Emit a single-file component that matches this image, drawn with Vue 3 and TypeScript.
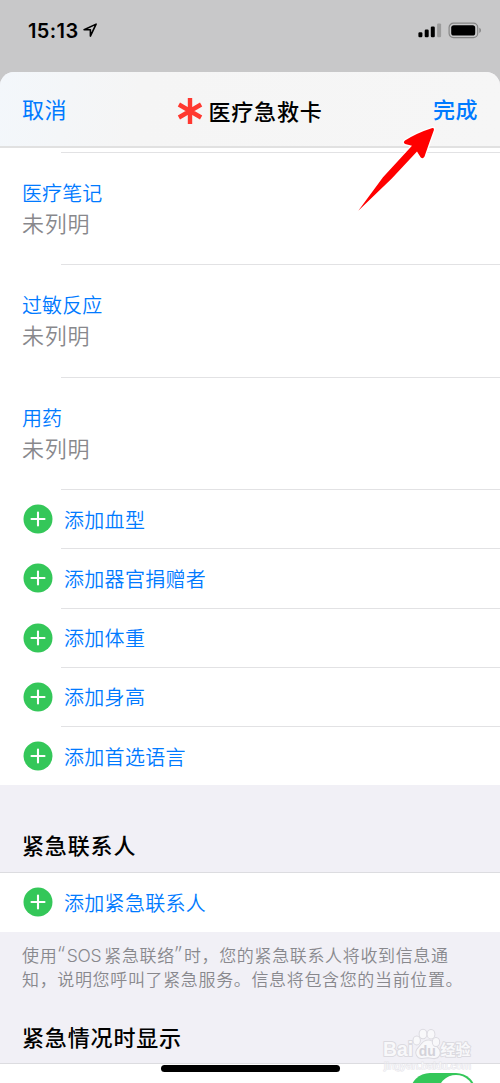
<script setup lang="ts">
interface Entry {
  label: string
  value: string
}

const entries: Entry[] = [
  { label: '医疗笔记', value: '未列明' },
  { label: '过敏反应', value: '未列明' },
  { label: '用药', value: '未列明' },
]

const additions: string[] = ['添加血型', '添加器官捐赠者', '添加体重', '添加身高', '添加首选语言']
</script>

<template>
  <div class="screen">
    <header class="status">
      <div class="clock">
        <span class="time">15:13</span>
        <svg class="location" width="15" height="15" viewBox="0 0 15 15">
          <path d="M1.1 6.8 13.1 1.1 7.4 13.1V6.8Z" />
        </svg>
      </div>
      <div class="indicators">
        <svg width="24" height="15" viewBox="0 0 24 15">
          <rect x="0.4" y="9.2" width="4" height="5" rx="1.2" />
          <rect x="6.7" y="6.6" width="4" height="7.6" rx="1.2" />
          <rect x="12.8" y="3.6" width="4" height="10.6" rx="1.2" />
          <rect x="19.1" y="0.4" width="4" height="13.8" rx="1.2" fill="#9c9c9c" />
        </svg>
        <svg width="34" height="17" viewBox="0 0 34 17">
          <rect x="1.1" y="1.2" width="28.6" height="14.4" rx="4.4" fill="none" stroke="#858585" stroke-width="1.2" />
          <rect x="3.2" y="3.2" width="24" height="10.4" rx="2.6" />
          <path d="M31.3 5.8C33.5 6.8 33.5 10 31.3 11Z" fill="#858585" />
        </svg>
      </div>
    </header>

    <main class="sheet">
      <nav class="nav">
        <span class="action">取消</span>
        <div class="title">
          <svg width="26" height="28" viewBox="0 0 26 28">
            <path d="M13 1V27M1.9 7.5 24.1 20.5M1.9 20.5 24.1 7.5" stroke="#ff3830" stroke-width="4.4" />
          </svg>
          <span>医疗急救卡</span>
        </div>
        <span class="action done">完成</span>
      </nav>

      <section class="entries">
        <div v-for="entry in entries" :key="entry.label" class="entry">
          <div class="label">{{ entry.label }}</div>
          <div class="value">{{ entry.value }}</div>
        </div>
      </section>

      <section class="additions">
        <div v-for="name in additions" :key="name" class="row">
          <svg class="plus" width="30" height="30" viewBox="0 0 30 30">
            <circle cx="15" cy="15" r="14.5" fill="#34c759" />
            <path d="M15 8.5V21.5M8.5 15H21.5" stroke="#fff" stroke-width="2.1" stroke-linecap="round" />
          </svg>
          <div class="row-text">{{ name }}</div>
        </div>
      </section>

      <h2 class="heading contacts">紧急联系人</h2>
      <div class="row contact">
        <svg class="plus" width="30" height="30" viewBox="0 0 30 30">
          <circle cx="15" cy="15" r="14.5" fill="#34c759" />
          <path d="M15 8.5V21.5M8.5 15H21.5" stroke="#fff" stroke-width="2.1" stroke-linecap="round" />
        </svg>
        <div class="row-text">添加紧急联系人</div>
      </div>
      <p class="note">
        <span class="line">使用<span class="quote open">“</span><span class="latin">SOS</span>紧急联络<span class="quote">”</span>时，您的紧急联系人将收到信息通</span>
        <span class="line">知，说明您呼叫了紧急服务。信息将包含您的当前位置。</span>
      </p>
      <h2 class="heading display">紧急情况时显示</h2>
      <div class="switch-row">
        <div class="switch"><div class="knob"></div></div>
      </div>
    </main>

    <svg class="arrow" width="86" height="92" viewBox="0 0 86 92">
      <path
        d="M3.3 85.7 28 52.2 57 20.8 50.2 19Q47.6 17.2 50 15.4Q62 7.8 77.4 2.9Q79.6 2.8 78.9 5Q74.5 17 69.4 31.8Q67.8 34.4 65.6 32.2L62 26.6 36.8 53.6Z"
        fill="#f00"
        stroke="#fff"
        stroke-width="2.6"
        stroke-linejoin="round"
        paint-order="stroke"
      />
    </svg>

    <div class="home-bar"></div>

    <svg class="watermark" width="96" height="46" viewBox="0 0 96 46">
      <g fill="#f8f8fa" stroke="#dbdae0" stroke-width="2" paint-order="stroke" stroke-linejoin="round">
        <text class="mark" x="1" y="28.4" font-size="19.5" textLength="30" lengthAdjust="spacingAndGlyphs">Bai</text>
        <path d="M46.5 12.5C41 12.5 39.5 17 36.5 20C31.5 25 36 30.5 40 30L46 29.3 51 30C57 31 60 24.5 56 20.5C52.5 17 51.5 12.5 46.5 12.5Z" />
        <ellipse cx="34.7" cy="12.4" rx="3.2" ry="4" />
        <ellipse cx="41" cy="6" rx="3.4" ry="4.3" />
        <ellipse cx="49" cy="6.2" rx="3.4" ry="4.3" />
        <ellipse cx="54" cy="14" rx="3.2" ry="4" />
        <text class="mark han" x="58.5" y="27" font-size="15" textLength="30" lengthAdjust="spacingAndGlyphs">经验</text>
      </g>
      <text class="mark" x="36.8" y="27.5" font-size="14" textLength="17" fill="#d3d2d9">du</text>
      <text class="mark site" x="2" y="41" font-size="9" textLength="87" lengthAdjust="spacingAndGlyphs" fill="#f8f8fa" stroke="#e6e5ea" stroke-width="1" paint-order="stroke">jingyan.baidu.com</text>
    </svg>
  </div>
</template>

<style>
body {
  margin: 0;
  overflow: hidden;
}
</style>

<style scoped>
.screen {
  position: relative;
  width: 500px;
  height: 1083px;
  overflow: hidden;
  background: #c8c8c9;
  color: #000;
  font-family: Inter, "Noto Sans CJK SC", sans-serif;
}
.status {
  box-sizing: border-box;
  height: 72px;
  padding: 22px 18px 0 28px;
  display: flex;
  justify-content: space-between;
  align-items: flex-start;
}
.clock {
  display: flex;
}
.time {
  width: 55px;
  font-size: 20px;
  line-height: 19px;
  font-weight: 600;
  letter-spacing: 0.4px;
  white-space: nowrap;
}
.location {
  margin-top: 1px;
  fill: none;
  stroke: #000;
  stroke-width: 1.6;
  stroke-linejoin: round;
}
.indicators {
  display: flex;
  align-items: center;
  gap: 6px;
}
.sheet {
  height: 1011px;
  overflow: hidden;
  border-radius: 14px 14px 0 0;
  background: #f1f0f6;
}
.nav {
  box-sizing: border-box;
  height: 76px;
  padding: 0 22px;
  border-bottom: 2px solid #e1e1e1;
  background: linear-gradient(100deg, #f3f7fb, #f5f5f5 28%, #f6f6f6);
  display: flex;
  justify-content: space-between;
  align-items: center;
}
.action {
  padding-top: 2px;
  font-size: 22px;
  letter-spacing: 0.5px;
  color: #007aff;
  line-height: 32px;
}
.done {
  font-weight: 500;
}
.title {
  display: flex;
  align-items: center;
  gap: 5px;
  font-size: 22px;
  font-weight: 500;
  letter-spacing: 0.8px;
  line-height: 32px;
  padding-top: 4px;
}
.title span {
  padding-top: 2px;
}
.entries {
  background: #fff;
  padding-top: 4px;
}
.entry {
  box-sizing: border-box;
  height: 112.4px;
  padding: 27px 0 0 22px;
  background: linear-gradient(#e2e2e4, #e2e2e4) 61px 0 / 100% 1px no-repeat;
}
.label {
  font-size: 20px;
  line-height: 30px;
  letter-spacing: 0.1px;
  color: #007aff;
  font-weight: 350;
}
.value {
  margin-top: -1px;
  font-size: 22px;
  line-height: 32px;
  letter-spacing: 0.7px;
  color: #88888c;
  font-weight: 350;
}
.additions {
  background: #fff;
  height: 296px;
}
.row {
  height: 59.2px;
  padding-left: 23px;
  display: flex;
  align-items: center;
  background: linear-gradient(#e2e2e4, #e2e2e4) 61px 0 / 100% 1px no-repeat;
}
.plus {
  flex: none;
  margin-top: 1px;
}
.row-text {
  padding-top: 4px;
  margin-left: 11px;
  font-size: 20px;
  line-height: 30px;
  letter-spacing: 0.3px;
  color: #007aff;
  font-weight: 350;
}
.heading {
  box-sizing: border-box;
  margin: 0;
  padding-left: 22px;
  border-bottom: 1px solid #dcdce0;
  font-size: 22px;
  font-weight: 500;
  letter-spacing: 0.85px;
  line-height: 32px;
}
.contacts {
  height: 88px;
  padding-top: 45px;
}
.contact {
  height: 59px;
  background: #fff;
}
.contact .plus {
  margin-top: -1px;
}
.contact .row-text {
  padding-top: 2px;
}
.note {
  box-sizing: border-box;
  height: 90px;
  margin: 0;
  padding: 12px 0 0 22px;
  font-size: 17px;
  letter-spacing: 0.65px;
  color: #88888d;
  font-weight: 350;
  white-space: nowrap;
}
.line {
  display: block;
  height: 24px;
  line-height: 24px;
}
.quote {
  display: inline-block;
  width: 9px;
  font-family: "Noto Sans", sans-serif;
  font-size: 21px;
  line-height: 20px;
  letter-spacing: 0;
}
.open {
  padding-left: 1px;
  width: 8.5px;
}
.latin {
  display: inline-block;
  width: 37.5px;
  font-size: 17.5px;
  line-height: 20px;
  letter-spacing: -0.3px;
  font-weight: 300;
}
.display {
  height: 42px;
}
.switch-row {
  height: 60px;
  padding: 9px 24px 0 0;
  background: #fff;
  display: flex;
  justify-content: flex-end;
}
.switch {
  box-sizing: border-box;
  width: 66px;
  height: 40px;
  padding: 2px;
  border-radius: 20px;
  background: #34c759;
  display: flex;
  justify-content: flex-end;
}
.knob {
  width: 36px;
  height: 36px;
  border-radius: 50%;
  background: #fff;
}
.arrow {
  position: absolute;
  left: 355px;
  top: 125px;
}
.home-bar {
  position: absolute;
  left: 161px;
  top: 1065px;
  width: 179px;
  height: 7px;
  border-radius: 4px;
  background: #000;
}
.watermark {
  position: absolute;
  left: 382px;
  top: 1028px;
}
.mark {
  font-family: "Liberation Sans", "Noto Sans CJK SC", sans-serif;
  font-weight: 700;
}
.site {
  font-weight: 400;
}
</style>
